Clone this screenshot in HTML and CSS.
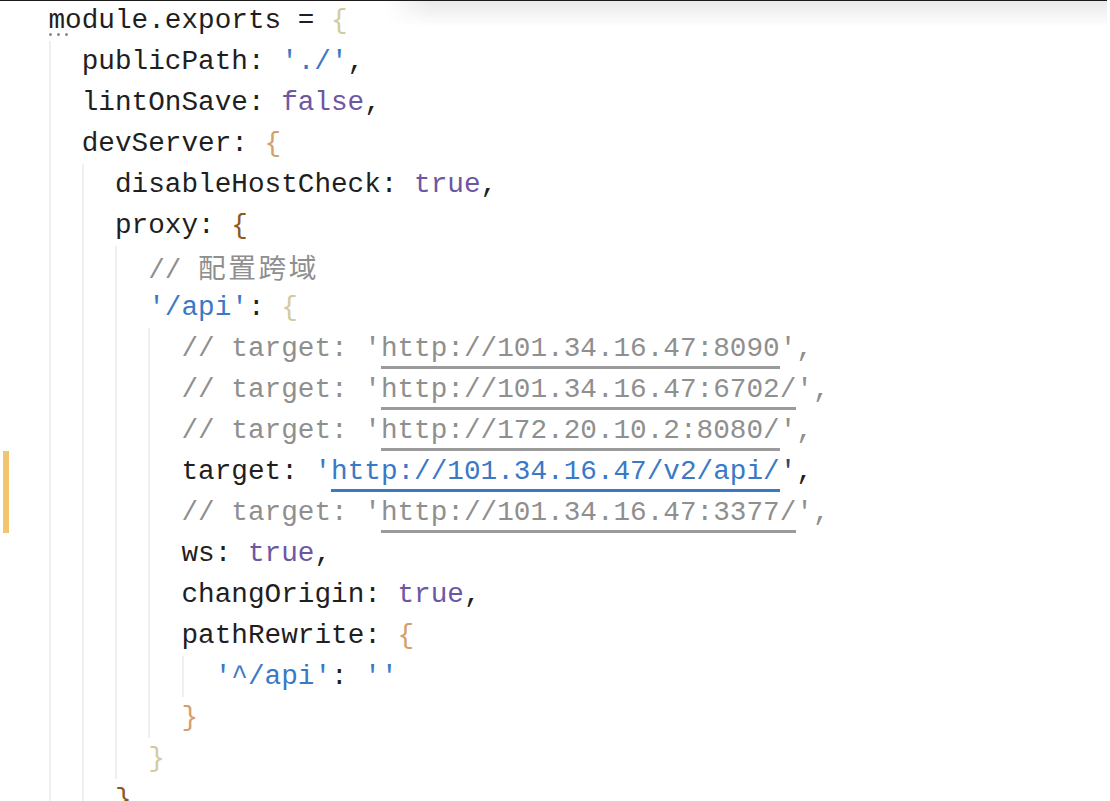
FILE: index.html
```html
<!DOCTYPE html>
<html>
<head>
<meta charset="utf-8">
<link rel="stylesheet" href="styles.css">
</head>
<body>
<div class="editor">
  <div class="line"><span class="gut"></span><span class="code">module.exports = <span class="b1">{</span></span><span class="dots"><i></i><i></i><i></i></span></div>
  <div class="line"><span class="gut"></span><span class="g"></span><span class="code">publicPath: <span class="s">'./'</span>,</span></div>
  <div class="line"><span class="gut"></span><span class="g"></span><span class="code">lintOnSave: <span class="kw">false</span>,</span></div>
  <div class="line"><span class="gut"></span><span class="g"></span><span class="code">devServer: <span class="b2">{</span></span></div>
  <div class="line"><span class="gut"></span><span class="g"></span><span class="g"></span><span class="code">disableHostCheck: <span class="kw">true</span>,</span></div>
  <div class="line"><span class="gut"></span><span class="g"></span><span class="g"></span><span class="code">proxy: <span class="b3">{</span></span></div>
  <div class="line"><span class="gut"></span><span class="g"></span><span class="g"></span><span class="g"></span><span class="code c">// <span class="cjk">配置跨域</span></span></div>
  <div class="line"><span class="gut"></span><span class="g"></span><span class="g"></span><span class="g"></span><span class="code"><span class="s">'/api'</span>: <span class="b1">{</span></span></div>
  <div class="line"><span class="gut"></span><span class="g"></span><span class="g"></span><span class="g"></span><span class="g"></span><span class="code c">// target: '<span class="u">http://101.34.16.47:8090</span>',</span></div>
  <div class="line"><span class="gut"></span><span class="g"></span><span class="g"></span><span class="g"></span><span class="g"></span><span class="code c">// target: '<span class="u">http://101.34.16.47:6702/</span>',</span></div>
  <div class="line"><span class="gut"></span><span class="g"></span><span class="g"></span><span class="g"></span><span class="g"></span><span class="code c">// target: '<span class="u">http://172.20.10.2:8080/</span>',</span></div>
  <div class="line"><span class="gut mod"></span><span class="g"></span><span class="g"></span><span class="g"></span><span class="g"></span><span class="code">target: <span class="s">'<span class="u">http://101.34.16.47/v2/api/</span></span><span class="sq">'</span>,</span></div>
  <div class="line"><span class="gut mod"></span><span class="g"></span><span class="g"></span><span class="g"></span><span class="g"></span><span class="code c">// target: '<span class="u">http://101.34.16.47:3377/</span>',</span></div>
  <div class="line"><span class="gut"></span><span class="g"></span><span class="g"></span><span class="g"></span><span class="g"></span><span class="code">ws: <span class="kw">true</span>,</span></div>
  <div class="line"><span class="gut"></span><span class="g"></span><span class="g"></span><span class="g"></span><span class="g"></span><span class="code">changOrigin: <span class="kw">true</span>,</span></div>
  <div class="line"><span class="gut"></span><span class="g"></span><span class="g"></span><span class="g"></span><span class="g"></span><span class="code">pathRewrite: <span class="b2">{</span></span></div>
  <div class="line"><span class="gut"></span><span class="g"></span><span class="g"></span><span class="g"></span><span class="g"></span><span class="g"></span><span class="code"><span class="s">'^/api'</span>: <span class="s">''</span></span></div>
  <div class="line"><span class="gut"></span><span class="g"></span><span class="g"></span><span class="g"></span><span class="g"></span><span class="code"><span class="b2">}</span></span></div>
  <div class="line"><span class="gut"></span><span class="g"></span><span class="g"></span><span class="g"></span><span class="code"><span class="b1">}</span></span></div>
  <div class="line"><span class="gut"></span><span class="g"></span><span class="g"></span><span class="code"><span class="b3">}</span></span></div>
  <div class="topline"></div>
  <div class="shade"></div>
</div>
</body>
</html>
```
FILE: styles.css
```css
html, body {
  margin: 0;
  padding: 0;
  background: #ffffff;
  overflow: hidden;
}

.editor {
  position: relative;
  width: 1110px;
  height: 801px;
  overflow: hidden;
  background: #ffffff;
  font-family: "Liberation Mono", "DejaVu Sans Mono", monospace;
  font-size: 27.7px;
  color: #1f1f1f;
}

.line {
  position: relative;
  display: flex;
  height: 41px;
  line-height: 41px;
}

.gut {
  flex: 0 0 48.5px;
}

.gut.mod::before {
  content: "";
  display: block;
  margin-left: 3px;
  width: 6px;
  height: 100%;
  background: #f1c46d;
}

.g {
  flex: 0 0 33.25px;
  box-sizing: border-box;
  border-left: 2px solid #efefef;
}

.code {
  white-space: pre;
}

.c {
  color: #8f8f8f;
}

.s {
  color: #3a79c6;
}

.sq {
  color: #26487c;
}

.kw {
  color: #6d57a3;
}

.b1 {
  color: #d2cb9f;
}

.b2 {
  color: #d39f6d;
}

.b3 {
  color: #8b5a22;
}

.cjk {
  font-family: "Noto Sans CJK SC", sans-serif;
  letter-spacing: 2.5px;
}

.u {
  display: inline-block;
  height: 41px;
  box-sizing: border-box;
  border-bottom: 3px solid currentColor;
  vertical-align: top;
}

.c .u {
  border-bottom-color: #9b9b9b;
}

.dots {
  position: absolute;
  left: 49px;
  top: 33px;
  display: flex;
  gap: 5px;
}

.dots i {
  display: block;
  width: 3px;
  height: 3px;
  border-radius: 50%;
  background: #8a8a8a;
}

.topline {
  position: absolute;
  top: 0;
  left: 0;
  width: 1107px;
  height: 1px;
  background: #1b1b1b;
}

.shade {
  position: absolute;
  top: 1px;
  left: 385px;
  width: 722px;
  height: 26px;
  background: linear-gradient(to bottom, rgba(0, 0, 0, 0.085), rgba(0, 0, 0, 0));
  -webkit-mask-image: linear-gradient(to right, transparent, #000 45px);
  mask-image: linear-gradient(to right, transparent, #000 45px);
  pointer-events: none;
}
```
